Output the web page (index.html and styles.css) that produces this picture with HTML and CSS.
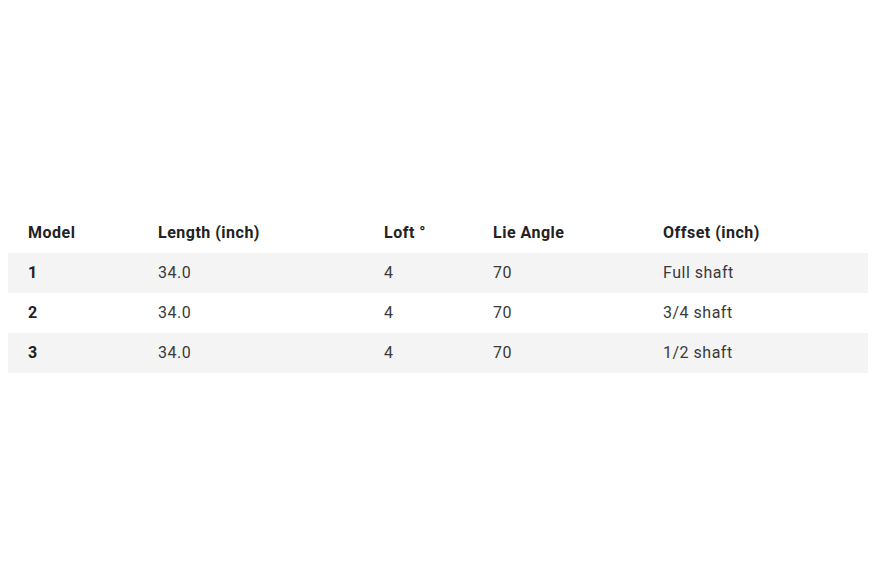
FILE: index.html
```html
<!DOCTYPE html>
<html lang="en">
<head>
<meta charset="utf-8">
<title>Specs</title>
<link rel="stylesheet" href="styles.css">
</head>
<body>
<main class="page">
  <table class="specs">
    <colgroup>
      <col class="c-model"><col class="c-length"><col class="c-loft"><col class="c-lie"><col class="c-offset">
    </colgroup>
    <thead>
      <tr><th>Model</th><th>Length (inch)</th><th>Loft °</th><th>Lie Angle</th><th>Offset (inch)</th></tr>
    </thead>
    <tbody>
      <tr class="shade"><th>1</th><td>34.0</td><td>4</td><td>70</td><td>Full shaft</td></tr>
      <tr><th>2</th><td>34.0</td><td>4</td><td>70</td><td>3/4 shaft</td></tr>
      <tr class="shade"><th>3</th><td>34.0</td><td>4</td><td>70</td><td>1/2 shaft</td></tr>
    </tbody>
  </table>
</main>
</body>
</html>
```

FILE: styles.css
```css
html, body { background: #fff; }
body { margin: 8px; font-family: Roboto, "DejaVu Sans", sans-serif; color: #333; }
.page { box-sizing: border-box; min-height: calc(100vh - 16px); padding-top: 2px; display: flex; align-items: center; }
.specs { width: 860px; border-collapse: collapse; table-layout: fixed; }
.c-model { width: 130px; }
.c-length { width: 226px; }
.c-loft { width: 109px; }
.c-lie { width: 170px; }
.c-offset { width: 225px; }
.specs th, .specs td { height: 40px; padding: 0 0 0 20px; text-align: left; font-size: 16px; line-height: 40px; letter-spacing: 0.5px; }
.specs th { font-weight: 700; color: #222; }
.specs td { font-weight: 400; color: #3a3a3a; }
.shade { background: #f4f4f4; }
```
